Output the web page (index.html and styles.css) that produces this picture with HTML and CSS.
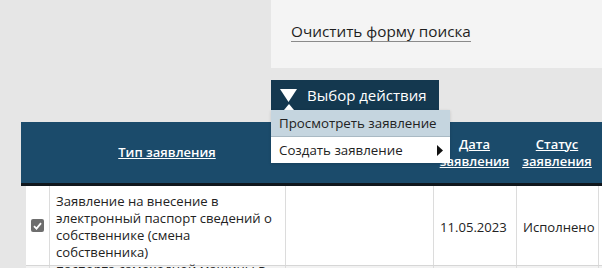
FILE: index.html
```html
<!DOCTYPE html>
<html lang="ru">
<head>
<meta charset="utf-8">
<link rel="stylesheet" href="styles.css">
</head>
<body>
<div class="page">
  <div class="top">
    <div class="top-spacer"></div>
    <div class="search-panel">
      <a class="clear-link" href="#">Очистить форму поиска</a>
    </div>
  </div>

  <div class="actions">
    <div class="action-wrap">
      <button class="action-btn" type="button">
        <svg class="tri-down" width="17" height="13" viewBox="0 0 17 13"><polygon points="0,0 17,0 8.5,13" fill="#fff"/></svg>
        <span>Выбор действия</span>
      </button>
      <svg class="caret-up" width="10" height="6" viewBox="0 0 10 6"><polygon points="0,6 10,6 5,0" fill="#fff"/></svg>
      <ul class="menu">
        <li class="menu-item active">Просмотреть заявление</li>
        <li class="menu-item has-sub">Создать заявление
          <svg class="tri-right" width="6" height="11" viewBox="0 0 6 11"><polygon points="0,0 6,5.5 0,11" fill="#111"/></svg>
        </li>
      </ul>
    </div>
  </div>

  <div class="table">
    <div class="thead">
      <div class="th"></div>
      <div class="th"><a href="#">Тип заявления</a></div>
      <div class="th"></div>
      <div class="th"><a href="#">Дата<br>заявления</a></div>
      <div class="th"><a href="#">Статус<br>заявления</a></div>
      <div class="th"></div>
    </div>
    <div class="row">
      <div class="td check"><span class="cb"><svg width="9" height="8" viewBox="0 0 9 8"><polyline points="1,4.2 3.5,6.6 8,1.2" fill="none" stroke="#fff" stroke-width="1.8"/></svg></span></div>
      <div class="td">Заявление на внесение в электронный паспорт сведений о собственнике (смена собственника)</div>
      <div class="td"></div>
      <div class="td mid">11.05.2023</div>
      <div class="td mid">Исполнено</div>
      <div class="td"></div>
    </div>
    <div class="row partial">
      <div class="td check"><span class="cb empty"></span></div>
      <div class="td">паспорта самоходной машины в</div>
      <div class="td"></div>
      <div class="td"></div>
      <div class="td"></div>
      <div class="td"></div>
    </div>
  </div>
</div>
</body>
</html>
```

FILE: styles.css
```css
html, body {
  margin: 0;
  padding: 0;
  background: #e6e6e6;
  overflow: hidden;
}
body {
  font-family: "Open Sans", "Noto Sans", sans-serif;
  color: #222;
  width: 602px;
  height: 268px;
}
.page {
  width: 602px;
}
.top {
  display: flex;
  height: 68px;
}
.top-spacer {
  width: 271px;
  flex: none;
}
.search-panel {
  flex: 1;
  background: #f4f4f4;
  padding: 20px 0 0 20px;
  box-sizing: border-box;
}
.clear-link {
  font-size: 15.3px;
  color: #1e1e1e;
  text-decoration: none;
  border-bottom: 1px solid #8a8a8a;
  line-height: 20px;
  padding-bottom: 0;
}
.actions {
  padding: 12px 0 0 271px;
  height: 30px;
}
.action-wrap {
  position: relative;
  width: 168px;
}
.action-btn {
  display: flex;
  align-items: center;
  gap: 10px;
  width: 168px;
  height: 30px;
  padding: 0 0 0 9px;
  border: 0;
  background: #14384f;
  color: #fff;
  font-family: "Open Sans", "Noto Sans", sans-serif;
  font-size: 15px;
  font-weight: 500;
  box-sizing: border-box;
  cursor: pointer;
}
.tri-down { flex: none; }
.caret-up {
  position: absolute;
  left: 13px;
  top: 24px;
}
.menu {
  position: absolute;
  left: 0;
  top: 30px;
  width: 179px;
  margin: 0;
  padding: 0;
  list-style: none;
  background: #fff;
  box-shadow: 0 1px 3px rgba(0,0,0,0.15);
  z-index: 5;
}
.menu-item {
  position: relative;
  height: 26px;
  line-height: 26px;
  padding-left: 8px;
  font-size: 13.3px;
  color: #222;
}
.menu-item.active {
  background: #c5d5df;
  border-bottom: 1px solid #a9b9c3;
}
.tri-right {
  position: absolute;
  right: 7px;
  top: 8px;
}
.table {
  margin: 12px 0 0 21px;
  width: 700px;
}
.thead {
  display: grid;
  grid-template-columns: 28px 236px 148px 83px 82px 1fr;
  height: 61px;
  background: #1b4b6b;
  border-bottom: 3px solid #10171d;
}
.th {
  display: flex;
  align-items: center;
  justify-content: center;
  text-align: center;
}
.th a {
  color: #fff;
  font-size: 13px;
  font-weight: 600;
  line-height: 17px;
  text-decoration: underline;
}
.row {
  display: grid;
  grid-template-columns: 23px 236px 148px 83px 82px 1fr;
  margin-left: 5px;
  background: #fff;
  border-bottom: 1px solid #d6d6d6;
}
.td {
  font-size: 13.1px;
  line-height: 17px;
  color: #222;
  padding: 7px 6px 4px 6px;
  border-left: 1px solid #dcdcdc;
}
.td.check {
  border-left: 0;
  padding: 0;
  display: flex;
  align-items: center;
  justify-content: center;
}
.td.mid {
  display: flex;
  align-items: center;
}
.row.partial {
  background: #f2f2f2;
  height: 20px;
}
.row.partial .td {
  padding-top: 0;
  line-height: 7px;
}
.row.partial .td.check {
  align-items: flex-start;
  padding-top: 2px;
}
.cb {
  width: 13px;
  height: 13px;
  border-radius: 2px;
  background: #6e6e6e;
  display: flex;
  align-items: center;
  justify-content: center;
}
.cb.empty {
  background: #fff;
  border: 1px solid #777;
  box-sizing: border-box;
}
```
